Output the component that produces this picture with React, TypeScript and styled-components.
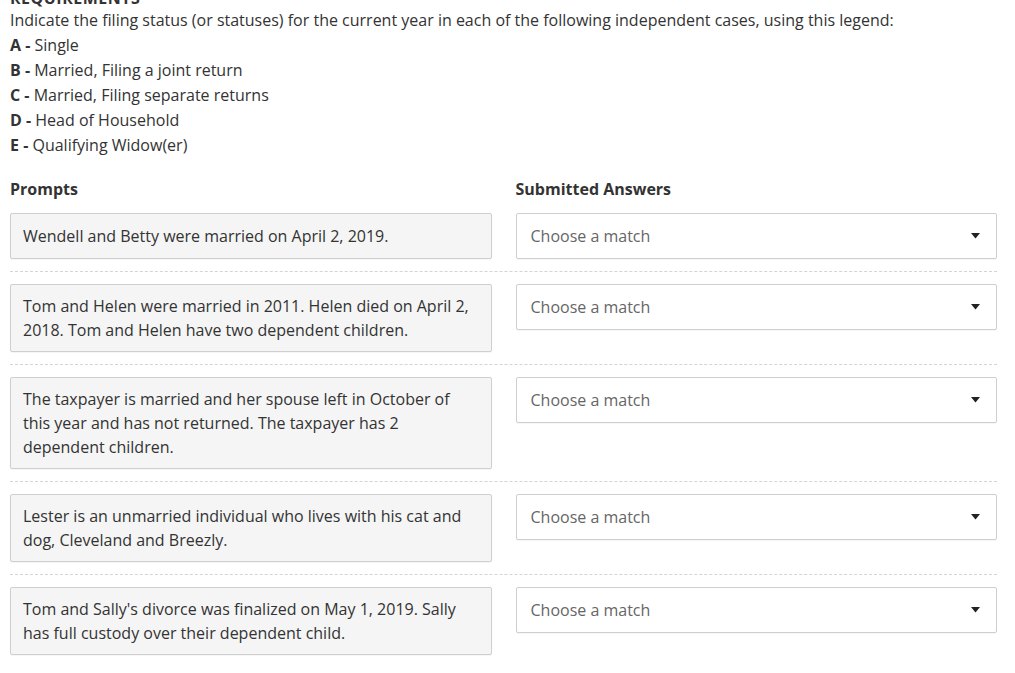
import styled, { createGlobalStyle } from 'styled-components'

const GlobalStyle = createGlobalStyle`
  body {
    margin: 0;
    background: #fff;
    font-family: "Open Sans", "Liberation Sans", sans-serif;
    color: #333;
    overflow: hidden;
  }
`

const Page = styled.div`
  margin-top: -12px;
  padding: 0 18px 0 10px;
`

const Title = styled.h2`
  margin: 0;
  font-size: 16px;
  line-height: 20px;
  font-weight: 700;
  text-transform: uppercase;
  letter-spacing: 0.5px;
`

const Line = styled.div`
  font-size: 16px;
  line-height: 25px;
`

const Key = styled.b`
  font-weight: 700;
`

const Columns = styled.div`
  display: grid;
  grid-template-columns: 1fr 1fr;
  column-gap: 24px;
`

const HeaderRow = styled(Columns)`
  margin-top: 19px;
`

const ColumnTitle = styled.div`
  font-size: 16px;
  line-height: 24px;
  font-weight: 700;
`

const Row = styled(Columns)`
  padding: 12px 0;
  border-bottom: 1px dashed #d4d4d4;

  &:last-child {
    border-bottom: none;
  }
`

const Prompt = styled.div`
  min-height: 46px;
  box-sizing: border-box;
  display: flex;
  align-items: center;
  padding: 9px 12px;
  background: #f5f5f5;
  border: 1px solid #cfcfcf;
  border-radius: 2px;
  box-shadow: 0 1px 1px rgba(0, 0, 0, 0.04);
  font-size: 16px;
  line-height: 24px;
  color: #333;
`

const Select = styled.div`
  height: 46px;
  box-sizing: border-box;
  display: flex;
  align-items: center;
  justify-content: space-between;
  padding: 0 16px 0 14px;
  background: #fff;
  border: 1px solid #cfcfcf;
  border-radius: 2px;
  box-shadow: 0 1px 1px rgba(0, 0, 0, 0.04);
  font-size: 16px;
  color: #666;
`

const Caret = () => (
  <svg width="9" height="6" viewBox="0 0 9 6">
    <path d="M0 0 L9 0 L4.5 5.5 Z" fill="#222" />
  </svg>
)

const legend = [
  ['A', 'Single'],
  ['B', 'Married, Filing a joint return'],
  ['C', 'Married, Filing separate returns'],
  ['D', 'Head of Household'],
  ['E', 'Qualifying Widow(er)'],
]

const prompts = [
  'Wendell and Betty were married on April 2, 2019.',
  'Tom and Helen were married in 2011. Helen died on April 2, 2018. Tom and Helen have two dependent children.',
  'The taxpayer is married and her spouse left in October of this year and has not returned. The taxpayer has 2 dependent children.',
  'Lester is an unmarried individual who lives with his cat and dog, Cleveland and Breezly.',
  "Tom and Sally's divorce was finalized on May 1, 2019. Sally has full custody over their dependent child.",
]

export default function App() {
  return (
    <>
      <GlobalStyle />
      <Page>
        <Title>Requirements</Title>
        <Line>
          Indicate the filing status (or statuses) for the current year in each of the following
          independent cases, using this legend:
        </Line>
        {legend.map(([k, v]) => (
          <Line key={k}>
            <Key>{k} -</Key> {v}
          </Line>
        ))}
        <HeaderRow>
          <ColumnTitle>Prompts</ColumnTitle>
          <ColumnTitle>Submitted Answers</ColumnTitle>
        </HeaderRow>
        <div>
          {prompts.map((p) => (
            <Row key={p}>
              <Prompt>{p}</Prompt>
              <div>
                <Select>
                  <span>Choose a match</span>
                  <Caret />
                </Select>
              </div>
            </Row>
          ))}
        </div>
      </Page>
    </>
  )
}
